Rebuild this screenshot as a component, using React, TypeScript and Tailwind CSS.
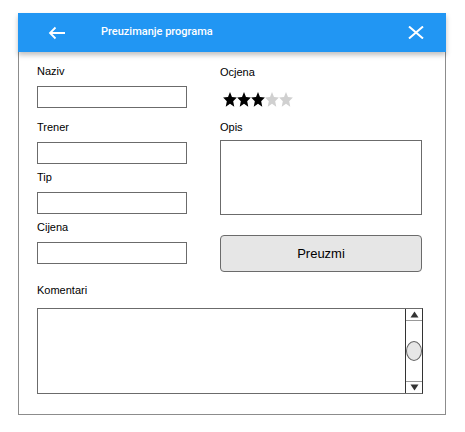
import React from 'react';

const Star: React.FC<{ filled: boolean }> = ({ filled }) => (
    <svg width="14" height="15" viewBox="1 1.5 22 21" preserveAspectRatio="none" className={filled ? 'fill-black' : 'fill-[#d0d0d0]'}>
        <path d="M12 1.5l3.1 7.1 7.7.7-5.8 5.1 1.7 7.6L12 18l-6.7 4 1.7-7.6-5.8-5.1 7.7-.7z" />
    </svg>
);

const Field: React.FC<{ label: string; top: string }> = ({ label, top }) => (
    <div className={`flex flex-col ${top}`}>
        <span className="text-[11px] leading-[14px] text-black">{label}</span>
        <div className="mt-2 h-[22px] w-[150px] border border-[#6b6b6b] bg-white" />
    </div>
);

export default function App() {
    return (
        <div className="min-h-screen bg-white pt-[13px] pl-[18px] font-['Liberation_Sans',Arial,sans-serif]">
            <div className="w-[428px] h-[402px] border-x border-b border-[#8c8c8c] flex flex-col">
                <div className="h-[39px] bg-[#2196f3] flex items-center shadow-[0_3px_5px_rgba(0,0,0,0.25)] relative z-10 -mx-px">
                    <svg width="18" height="14" viewBox="0 0 18 14" className="ml-[30px] stroke-white" fill="none" strokeWidth="1.8">
                        <path d="M17 7H2M7.5 1.5L2 7l5.5 5.5" />
                    </svg>
                    <span className="ml-[35px] text-[11px] font-medium text-white font-['Roboto',sans-serif]">Preuzimanje programa</span>
                    <svg width="16" height="13" viewBox="0 0 16 13" className="ml-auto mr-[22px] stroke-white" strokeWidth="2">
                        <path d="M1 0.5L15 12.5M15 0.5L1 12.5" />
                    </svg>
                </div>
                <div className="flex pl-[18px] pt-[12px]">
                    <div className="flex flex-col w-[150px]">
                        <Field label="Naziv" top="" />
                        <Field label="Trener" top="mt-[12px]" />
                        <Field label="Tip" top="mt-[6px]" />
                        <Field label="Cijena" top="mt-[6px]" />
                    </div>
                    <div className="flex flex-col ml-[33px] w-[202px] pt-px">
                        <span className="text-[11px] leading-[14px] text-black">Ocjena</span>
                        <div className="flex mt-[13px] pl-[3px]">
                            {[true, true, true, false, false].map((f, i) => (
                                <Star key={i} filled={f} />
                            ))}
                        </div>
                        <span className="mt-[13px] text-[11px] leading-[14px] text-black">Opis</span>
                        <div className="mt-[6px] h-[75px] border border-[#6b6b6b] bg-white" />
                        <button className="mt-[20px] h-[37px] rounded-[4px] border border-[#6b6b6b] bg-[#e6e6e6] text-[13px] text-black">
                            Preuzmi
                        </button>
                    </div>
                </div>
                <div className="flex flex-col pl-[18px] mt-[11px]">
                    <span className="text-[11px] leading-[14px] text-black">Komentari</span>
                    <div className="mt-[11px] w-[386px] h-[86px] border border-[#6b6b6b] border-r-[#333] bg-white flex justify-end">
                        <div className="w-[17px] border-l border-[#333] flex flex-col bg-white">
                            <div className="h-[12px] border-b border-[#999] flex items-center justify-center">
                                <svg width="9" height="7" viewBox="0 0 9 7"><path d="M4.5 0.5L8.5 6.5H0.5z" fill="#333" /></svg>
                            </div>
                            <div className="flex-1 flex items-center justify-center">
                                <div className="w-[16px] h-[20px] rounded-[50%] border border-[#666] bg-[#e6e6e6]" />
                            </div>
                            <div className="h-[12px] border-t border-[#999] flex items-center justify-center">
                                <svg width="9" height="7" viewBox="0 0 9 7"><path d="M4.5 6.5L8.5 0.5H0.5z" fill="#333" /></svg>
                            </div>
                        </div>
                    </div>
                </div>
            </div>
        </div>
    );
}
